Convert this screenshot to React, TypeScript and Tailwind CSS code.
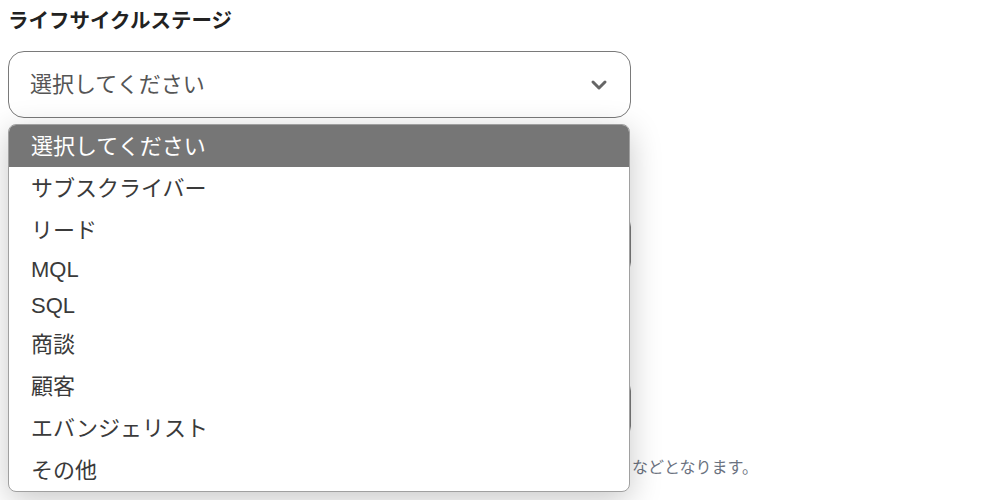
import { ChevronDown } from "lucide-react";

const options = [
  "選択してください",
  "サブスクライバー",
  "リード",
  "MQL",
  "SQL",
  "商談",
  "顧客",
  "エバンジェリスト",
  "その他",
];

const font = "font-['Liberation_Sans','Noto_Sans_CJK_JP',sans-serif]";

export default function App() {
  return (
    <div className={`min-h-[500px] bg-white px-2 pt-[6px] ${font}`}>
      {/* field 1 */}
      <label className="block text-[20.5px] font-bold leading-[30px] text-[#222]">
        ライフサイクルステージ
      </label>
      <div className="relative mt-[15px] w-[623px]">
        <div className="flex h-[67px] items-center justify-between rounded-[16px] border border-[#7a7a7a] bg-white pl-[21px] pr-[19px]">
          <span className="text-[22px] text-[#555]">選択してください</span>
          <ChevronDown className="h-[24px] w-[24px] text-[#666]" strokeWidth={3} />
        </div>

        {/* open dropdown */}
        <ul className="absolute left-0 top-[73px] z-10 w-[622px] overflow-hidden rounded-[8px] border border-[#a0a0a0] bg-white shadow-[0_8px_32px_rgba(0,0,0,0.22)]">
          {options.map((o, i) => (
            <li
              key={o}
              className={`flex items-center pl-[22px] pt-[2px] text-[22px] leading-none ${
                /^[A-Z]+$/.test(o) ? "h-[36px]" : "h-[42px]"
              } ${i === 0 ? "bg-[#767676] text-white" : "text-[#3a3a3a]"}`}
            >
              {o}
            </li>
          ))}
        </ul>
      </div>

      {/* field 2 (behind dropdown) */}
      <label className="mt-[40px] block text-[20px] font-bold leading-[30px] text-[#222]">
        会社名
      </label>
      <div className="mt-[23px] h-[67px] w-[623px] rounded-[16px] border border-[#7a7a7a] bg-white" />

      {/* field 3 (behind dropdown) */}
      <label className="mt-[40px] block text-[20px] font-bold leading-[30px] text-[#222]">
        メールアドレス
      </label>
      <div className="mt-[27px] h-[67px] w-[623px] rounded-[16px] border border-[#7a7a7a] bg-white" />
      <p className="mt-[15px] whitespace-nowrap text-[16px] leading-[22px] text-[#6b7280]">
        <span className="inline-block w-[624px] overflow-hidden align-bottom">
          ライフサイクルステージの選択肢は、サブスクライバー、リード、MQL、SQL、商談、顧客
        </span>
        などとなります。
      </p>
    </div>
  );
}
